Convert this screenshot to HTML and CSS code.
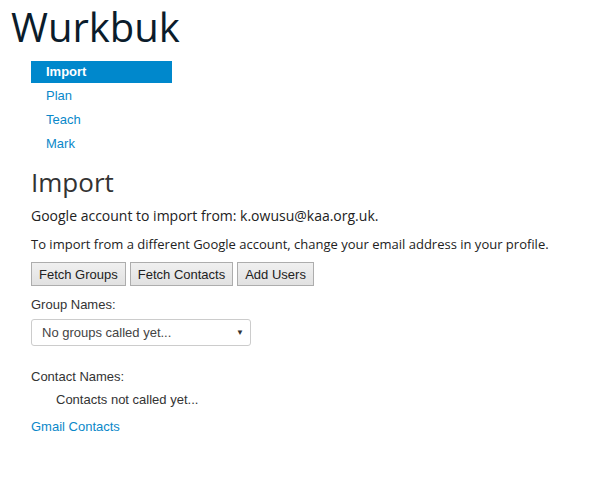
FILE: index.html
```html
<!DOCTYPE html>
<html>
<head>
<meta charset="utf-8">
<link rel="stylesheet" href="styles.css">
</head>
<body>
<header class="brand">Wurkbuk</header>
<nav class="nav">
  <a class="nav-item active">Import</a>
  <a class="nav-item">Plan</a>
  <a class="nav-item">Teach</a>
  <a class="nav-item">Mark</a>
</nav>
<main class="content">
  <h1 class="title">Import</h1>
  <p class="info account">Google account to import from: k.owusu@kaa.org.uk.</p>
  <p class="info">To import from a different Google account, change your email address in your profile.</p>
  <div class="buttons">
    <button class="btn">Fetch Groups</button>
    <button class="btn">Fetch Contacts</button>
    <button class="btn">Add Users</button>
  </div>
  <div class="label">Group Names:</div>
  <div class="select">
    <span>No groups called yet...</span>
    <span class="caret">&#9660;</span>
  </div>
  <div class="label contacts-label">Contact Names:</div>
  <div class="contacts">Contacts not called yet...</div>
  <a class="link">Gmail Contacts</a>
</main>
</body>
</html>
```
FILE: styles.css
```css
html, body { margin: 0; padding: 0; background: #fff; }
body { font-family: "Open Sans", sans-serif; color: #333; }
.brand {
  font-family: "Open Sans", sans-serif;
  font-size: 40px;
  font-weight: 500;
  line-height: 54px;
  color: #0b1c2b;
  padding-left: 11px;
}
.nav {
  display: flex;
  flex-direction: column;
  margin-left: 31px;
  width: 141px;
  margin-top: 7px;
}
.nav-item {
  font-family: "Liberation Sans", Arial, sans-serif;
  font-size: 13px;
  line-height: 22px;
  height: 22px;
  padding-left: 15px;
  color: #0a88c9;
  margin-bottom: 2px;
}
.nav-item.active {
  background: #0088cc;
  color: #fff;
  font-weight: bold;
}
.content { padding-left: 31px; }
.title {
  font-family: "Open Sans", sans-serif;
  font-weight: normal;
  font-size: 26px;
  line-height: 34px;
  margin: 8px 0 0;
  color: #333;
}
.info {
  font-size: 13px;
  line-height: 20px;
  margin: 0 0 8px;
  color: #222;
}
.info.account { font-size: 14px; margin-top: 7px; }
.buttons { display: flex; gap: 4px; margin-top: 0; }
.btn {
  font-family: "Liberation Sans", Arial, sans-serif;
  font-size: 13px;
  color: #222;
  background: linear-gradient(#f0f0f0, #e1e1e1);
  border: 1px solid #adadad;
  height: 24px;
  padding: 0 7px;
  margin: 0;
}
.label {
  font-family: "Liberation Sans", Arial, sans-serif;
  font-size: 13px;
  color: #333;
  margin-top: 11px;
  line-height: 16px;
}
.select {
  font-family: "Liberation Sans", Arial, sans-serif;
  font-size: 13px;
  color: #444;
  width: 220px;
  height: 27px;
  box-sizing: border-box;
  border: 1px solid #ccc;
  border-radius: 3px;
  margin-top: 6px;
  display: flex;
  align-items: center;
  justify-content: space-between;
  padding: 0 6px 0 10px;
}
.caret { font-size: 8px; color: #333; }
.contacts-label { margin-top: 23px; }
.contacts {
  font-family: "Liberation Sans", Arial, sans-serif;
  font-size: 13px;
  color: #333;
  padding-left: 25px;
  margin-top: 7px;
  line-height: 16px;
}
.link {
  display: block;
  font-family: "Liberation Sans", Arial, sans-serif;
  font-size: 13px;
  color: #0a88c9;
  margin-top: 11px;
  line-height: 16px;
}
```
